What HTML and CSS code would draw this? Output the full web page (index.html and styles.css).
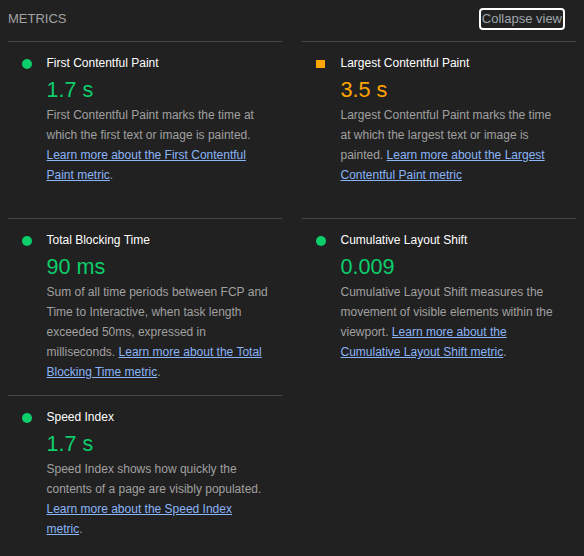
FILE: index.html
```html
<!DOCTYPE html>
<html lang="en">
<head>
<meta charset="utf-8">
<title>Metrics</title>
<link rel="stylesheet" href="styles.css">
</head>
<body>
<div class="metrics">
  <div class="metrics-header">
    <span class="metrics-title">METRICS</span>
    <button class="toggle" type="button">Collapse view</button>
  </div>
  <div class="metrics-grid">
    <div class="metric">
      <span class="icon pass"></span>
      <div class="metric-body">
        <div class="metric-name">First Contentful Paint</div>
        <div class="metric-value pass-text">1.7 s</div>
        <div class="metric-desc">First Contentful Paint marks the time at which the first text or image is painted. <a href="#">Learn more about the First Contentful Paint metric</a>.</div>
      </div>
    </div>
    <div class="metric">
      <span class="icon average"></span>
      <div class="metric-body">
        <div class="metric-name">Largest Contentful Paint</div>
        <div class="metric-value average-text">3.5 s</div>
        <div class="metric-desc">Largest Contentful Paint marks the time at which the largest text or image is painted. <a href="#">Learn more about the Largest Contentful Paint metric</a></div>
      </div>
    </div>
    <div class="metric">
      <span class="icon pass"></span>
      <div class="metric-body">
        <div class="metric-name">Total Blocking Time</div>
        <div class="metric-value pass-text">90 ms</div>
        <div class="metric-desc">Sum of all time periods between FCP and Time to Interactive, when task length exceeded 50ms, expressed in milliseconds. <a href="#">Learn more about the Total Blocking Time metric</a>.</div>
      </div>
    </div>
    <div class="metric">
      <span class="icon pass"></span>
      <div class="metric-body">
        <div class="metric-name">Cumulative Layout Shift</div>
        <div class="metric-value pass-text">0.009</div>
        <div class="metric-desc">Cumulative Layout Shift measures the movement of visible elements within the viewport. <a href="#">Learn more about the Cumulative Layout Shift metric</a>.</div>
      </div>
    </div>
    <div class="metric">
      <span class="icon pass"></span>
      <div class="metric-body">
        <div class="metric-name">Speed Index</div>
        <div class="metric-value pass-text">1.7 s</div>
        <div class="metric-desc">Speed Index shows how quickly the contents of a page are visibly populated. <a href="#">Learn more about the Speed Index metric</a>.</div>
      </div>
    </div>
  </div>
</div>
</body>
</html>
```

FILE: styles.css
```css
html, body {
  background: #212121;
}
body {
  margin: 8px;
  font-family: "Liberation Sans", Arial, sans-serif;
  color: #f5f5f5;
}
.metrics {
  width: 568px;
}
.metrics-header {
  display: flex;
  justify-content: space-between;
  align-items: flex-start;
  height: 33px;
  padding-right: 11px;
}
.metrics-title {
  font-size: 13px;
  line-height: 21px;
  color: #a3a3a3;
}
.toggle {
  font-family: "Liberation Sans", Arial, sans-serif;
  font-size: 13px;
  line-height: 18px;
  padding: 0 1px;
  margin: 0;
  border: 2px solid #ffffff;
  border-radius: 4px;
  background: #212121;
  color: #9ea6ae;
}
.metrics-grid {
  display: grid;
  grid-template-columns: 1fr 1fr;
  grid-auto-rows: 1fr;
  column-gap: 20px;
}
.metric {
  display: grid;
  grid-template-columns: 38.5px 1fr;
  align-items: start;
  border-top: 1px solid #474747;
  padding: 11px 13px 13px 0;
}
.icon {
  display: block;
  margin-left: 14px;
}
.icon.pass {
  width: 10px;
  height: 10px;
  border-radius: 50%;
  background: #0cce6b;
  margin-top: 6px;
}
.icon.average {
  width: 9px;
  height: 8px;
  background: #ffa400;
  margin-top: 7px;
}
.metric-name {
  font-size: 12px;
  line-height: 20px;
  color: #ffffff;
}
.metric-value {
  font-size: 21.6px;
  line-height: 32px;
  padding-top: 1px;
  margin-bottom: -1px;
}
.pass-text {
  color: #0cce6b;
}
.average-text {
  color: #ffa400;
}
.metric-desc {
  font-size: 12px;
  line-height: 20px;
  color: #a0a0a0;
}
.metric-desc a {
  color: #8ab4f8;
  text-decoration: underline;
}
```
